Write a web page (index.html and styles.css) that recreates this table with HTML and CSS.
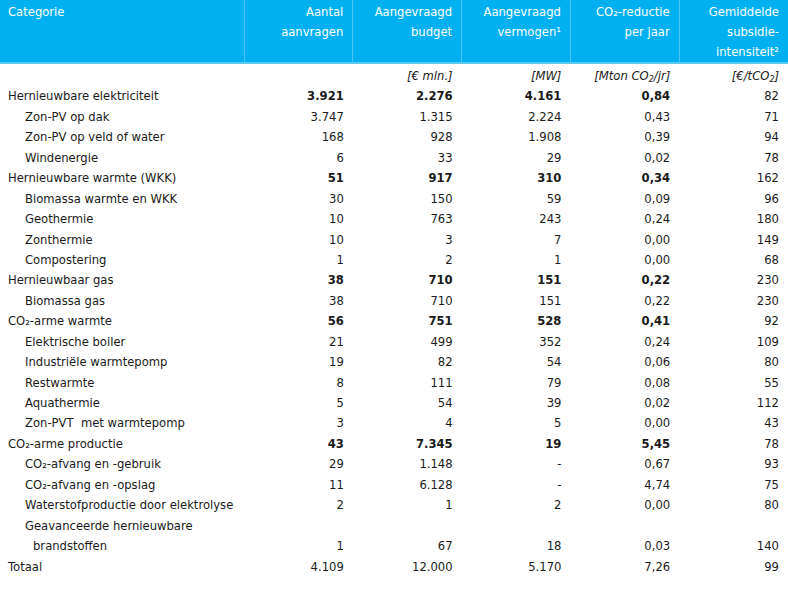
FILE: index.html
```html
<!DOCTYPE html>
<html lang="nl">
<head>
<meta charset="utf-8">
<title>Aanvragen</title>
<link rel="stylesheet" href="styles.css">
</head>
<body>
<table class="tbl">
  <colgroup>
    <col class="c-cat">
    <col><col><col><col><col>
  </colgroup>
  <thead>
    <tr class="head">
      <th class="cat">Categorie</th>
      <th>Aantal<br>aanvragen</th>
      <th>Aangevraagd<br>budget</th>
      <th>Aangevraagd<br>vermogen¹</th>
      <th>CO₂-reductie<br>per jaar</th>
      <th>Gemiddelde<br>subsidie-<br>intensiteit²</th>
    </tr>
  </thead>
  <tbody>
    <tr class="units">
      <td></td><td></td>
      <td>[€ mln.]</td>
      <td>[MW]</td>
      <td>[Mton CO<sub>2</sub>/jr]</td>
      <td>[€/tCO<sub>2</sub>]</td>
    </tr>
    <tr class="grp"><td>Hernieuwbare elektriciteit</td><td>3.921</td><td>2.276</td><td>4.161</td><td>0,84</td><td>82</td></tr>
    <tr class="sub"><td>Zon-PV op dak</td><td>3.747</td><td>1.315</td><td>2.224</td><td>0,43</td><td>71</td></tr>
    <tr class="sub"><td>Zon-PV op veld of water</td><td>168</td><td>928</td><td>1.908</td><td>0,39</td><td>94</td></tr>
    <tr class="sub"><td>Windenergie</td><td>6</td><td>33</td><td>29</td><td>0,02</td><td>78</td></tr>
    <tr class="grp"><td>Hernieuwbare warmte (WKK)</td><td>51</td><td>917</td><td>310</td><td>0,34</td><td>162</td></tr>
    <tr class="sub"><td>Biomassa warmte en WKK</td><td>30</td><td>150</td><td>59</td><td>0,09</td><td>96</td></tr>
    <tr class="sub"><td>Geothermie</td><td>10</td><td>763</td><td>243</td><td>0,24</td><td>180</td></tr>
    <tr class="sub"><td>Zonthermie</td><td>10</td><td>3</td><td>7</td><td>0,00</td><td>149</td></tr>
    <tr class="sub"><td>Compostering</td><td>1</td><td>2</td><td>1</td><td>0,00</td><td>68</td></tr>
    <tr class="grp"><td>Hernieuwbaar gas</td><td>38</td><td>710</td><td>151</td><td>0,22</td><td>230</td></tr>
    <tr class="sub"><td>Biomassa gas</td><td>38</td><td>710</td><td>151</td><td>0,22</td><td>230</td></tr>
    <tr class="grp"><td>CO₂-arme warmte</td><td>56</td><td>751</td><td>528</td><td>0,41</td><td>92</td></tr>
    <tr class="sub"><td>Elektrische boiler</td><td>21</td><td>499</td><td>352</td><td>0,24</td><td>109</td></tr>
    <tr class="sub"><td>Industriële warmtepomp</td><td>19</td><td>82</td><td>54</td><td>0,06</td><td>80</td></tr>
    <tr class="sub"><td>Restwarmte</td><td>8</td><td>111</td><td>79</td><td>0,08</td><td>55</td></tr>
    <tr class="sub"><td>Aquathermie</td><td>5</td><td>54</td><td>39</td><td>0,02</td><td>112</td></tr>
    <tr class="sub"><td>Zon-PVT&nbsp; met warmtepomp</td><td>3</td><td>4</td><td>5</td><td>0,00</td><td>43</td></tr>
    <tr class="grp"><td>CO₂-arme productie</td><td>43</td><td>7.345</td><td>19</td><td>5,45</td><td>78</td></tr>
    <tr class="sub"><td>CO₂-afvang en -gebruik</td><td>29</td><td>1.148</td><td>-</td><td>0,67</td><td>93</td></tr>
    <tr class="sub"><td>CO₂-afvang en -opslag</td><td>11</td><td>6.128</td><td>-</td><td>4,74</td><td>75</td></tr>
    <tr class="sub"><td>Waterstofproductie door elektrolyse</td><td>2</td><td>1</td><td>2</td><td>0,00</td><td>80</td></tr>
    <tr class="sub"><td>Geavanceerde hernieuwbare</td><td></td><td></td><td></td><td></td><td></td></tr>
    <tr class="sub cont"><td>brandstoffen</td><td>1</td><td>67</td><td>18</td><td>0,03</td><td>140</td></tr>
    <tr class="total"><td>Totaal</td><td>4.109</td><td>12.000</td><td>5.170</td><td>7,26</td><td>99</td></tr>
  </tbody>
</table>
</body>
</html>
```

FILE: styles.css
```css
html, body {
  margin: 0;
  padding: 0;
  background: #ffffff;
}

body {
  font-family: "DejaVu Sans", Verdana, sans-serif;
  font-size: 11.6px;
  color: #1a1a1a;
}

.tbl {
  width: 788px;
  border-collapse: collapse;
  table-layout: fixed;
}

.c-cat {
  width: 244px;
}

.head th {
  background: #00b0f0;
  color: #ffffff;
  font-weight: normal;
  text-align: right;
  vertical-align: top;
  line-height: 20px;
  height: 58px;
  padding: 2px 9px 0 0;
  border-left: 1px solid #4cc6f3;
  border-bottom: 2px solid #5ccbf4;
  box-sizing: border-box;
}

.head th.cat {
  text-align: left;
  padding-left: 8px;
  border-left: none;
}

.tbl td {
  padding: 0 9px 0 0;
  line-height: 20.43px;
  text-align: right;
  white-space: nowrap;
}

.tbl td:first-child {
  text-align: left;
  padding-left: 8px;
}

.units td {
  font-style: italic;
  padding-top: 2px;
}

.units sub {
  font-size: 8px;
  vertical-align: -2px;
  line-height: 0;
}

.grp td:nth-child(n+2):nth-child(-n+5) {
  font-weight: bold;
}

.sub td:first-child {
  padding-left: 25px;
}

.sub.cont td:first-child {
  padding-left: 33px;
}
```
